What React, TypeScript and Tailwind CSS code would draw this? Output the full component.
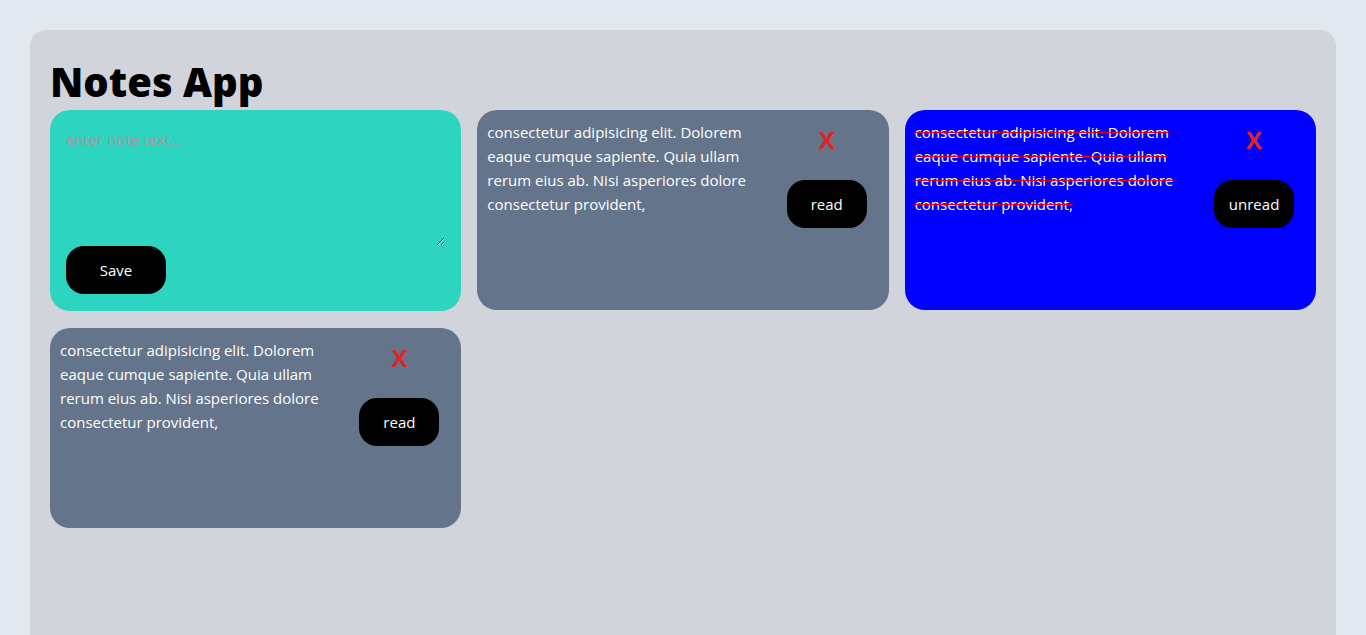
import { useState } from "react";

type Note = { id: number; text: string; read: boolean };

const lorem =
  "consectetur adipisicing elit. Dolorem eaque cumque sapiente. Quia ullam rerum eius ab. Nisi asperiores dolore consectetur provident,";

function NoteCard({ note, onToggle, onDelete }: { note: Note; onToggle: () => void; onDelete: () => void }) {
  return (
    <div
      className={
        "flex h-[200px] rounded-[20px] py-[10px] pl-[10px] pr-[12px] text-white " +
        (note.read ? "bg-[#0000ff]" : "bg-[#64748b]")
      }
    >
      <p
        className={
          "w-[290px] text-[15px] leading-[24px] " +
          (note.read ? "line-through decoration-red-600" : "")
        }
      >
        {note.text}
      </p>
      <div className="ml-auto flex w-[100px] flex-col items-center">
        <button
          onClick={onDelete}
          className="mt-[4px] text-[24px] font-bold leading-[32px] text-[#dc2626]"
        >
          X
        </button>
        <button
          onClick={onToggle}
          className="mt-[24px] h-[48px] w-[80px] rounded-[18px] bg-black text-[15px] text-white"
        >
          {note.read ? "unread" : "read"}
        </button>
      </div>
    </div>
  );
}

export default function App() {
  const [text, setText] = useState("");
  const [notes, setNotes] = useState<Note[]>([
    { id: 1, text: lorem, read: false },
    { id: 2, text: lorem, read: true },
    { id: 3, text: lorem, read: false },
  ]);

  const save = () => {
    if (!text.trim()) return;
    setNotes([...notes, { id: Date.now(), text, read: false }]);
    setText("");
  };

  return (
    <div className="min-h-[635px] bg-[#e2e8f0] px-[30px] pt-[30px] font-['Open_Sans','Noto_Sans',sans-serif]">
      <div className="min-h-[605px] rounded-t-[16px] bg-[#d1d5db] px-[20px] pt-[20px]">
        <h1 className="mt-[4px] text-[40px] font-black leading-[56px] text-black">Notes App</h1>
        <div className="grid grid-cols-3 gap-x-[16px] gap-y-[17px]">
          <div className="flex h-[201px] flex-col rounded-[20px] bg-[#2dd4bf] px-[16px] pt-[18px]">
            <textarea
              value={text}
              onChange={(e) => setText(e.target.value)}
              placeholder="enter note text..."
              className="h-[118px] w-full bg-transparent text-[15px] text-black outline-none placeholder:text-[#b58e9e]"
            />
            <button
              onClick={save}
              className="h-[48px] w-[100px] rounded-[18px] bg-black text-[15px] text-white"
            >
              Save
            </button>
          </div>
          {notes.map((n) => (
            <NoteCard
              key={n.id}
              note={n}
              onDelete={() => setNotes(notes.filter((x) => x.id !== n.id))}
              onToggle={() => setNotes(notes.map((x) => (x.id === n.id ? { ...x, read: !x.read } : x)))}
            />
          ))}
        </div>
      </div>
    </div>
  );
}
